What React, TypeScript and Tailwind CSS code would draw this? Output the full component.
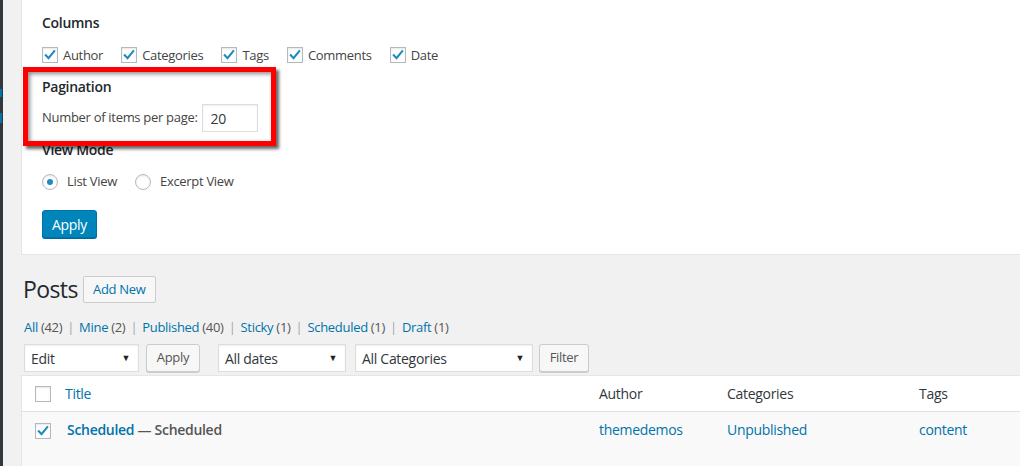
import type { ReactNode } from 'react';

const FONT = { fontFamily: '"Open Sans", "Noto Sans", Arial, sans-serif' };

function Check({ checked = false }: { checked?: boolean }) {
  return (
    <span className="flex h-4 w-4 shrink-0 items-center justify-center border border-[#b4b9be] bg-white shadow-[inset_0_1px_2px_rgba(0,0,0,0.1)]">
      {checked && (
        <svg viewBox="0 0 16 16" className="h-4 w-4">
          <path d="M3.2 8.4 L6.3 11.6 L12.8 3.6" fill="none" stroke="#1e8cbe" strokeWidth="2.4" strokeLinecap="square" />
        </svg>
      )}
    </span>
  );
}

function Radio({ checked = false }: { checked?: boolean }) {
  return (
    <span className="flex h-4 w-4 shrink-0 items-center justify-center rounded-full border border-[#b4b9be] bg-white shadow-[inset_0_1px_2px_rgba(0,0,0,0.1)]">
      {checked && <span className="h-[6px] w-[6px] rounded-full bg-[#1e8cbe]" />}
    </span>
  );
}

function Select({ label, width }: { label: string; width: string }) {
  return (
    <div className={`flex h-[28px] items-center justify-between border border-[#ddd] bg-white pl-[6px] pr-[8px] text-[14px] text-[#32373c] shadow-[inset_0_1px_2px_rgba(0,0,0,0.07)] ${width}`}>
      <span>{label}</span>
      <span className="text-[9px] text-[#222]">▼</span>
    </div>
  );
}

function Button({ children, className = '' }: { children: ReactNode; className?: string }) {
  return (
    <button className={`h-[28px] rounded-[3px] border border-[#ccc] bg-[#f7f7f7] text-[13px] text-[#555] shadow-[0_1px_0_#ccc] ${className}`}>
      {children}
    </button>
  );
}

const COLUMNS = ['Author', 'Categories', 'Tags', 'Comments', 'Date'];

const VIEWS: [string, number][] = [
  ['All', 42],
  ['Mine', 2],
  ['Published', 40],
  ['Sticky', 1],
  ['Scheduled', 1],
  ['Draft', 1],
];

export default function App() {
  return (
    <div
      className="relative flex h-[466px] w-[1020px] overflow-hidden bg-[#f1f1f1] text-[13px] tracking-[-0.3px] text-[#444]"
      style={FONT}
    >
      {/* admin menu edge */}
      <aside className="flex w-[3px] shrink-0 flex-col bg-[#32373c]">
        <div className="mt-[89px] h-[8px] w-[2px] bg-[#0073aa]" />
        <div className="mt-[16px] h-[10px] w-[2px] bg-[#0073aa]" />
      </aside>

      <div className="flex flex-1 flex-col pl-[18px]">
        {/* Screen options */}
        <section className="h-[255px] border-b border-l border-[#e5e5e5] bg-white pl-[20px] pt-[13px]">
          <h5 className="h-[20px] text-[14px] font-semibold leading-[20px] text-[#23282d]">Columns</h5>
          <div className="mt-[14px] flex h-[16px] items-center gap-[18px]">
            {COLUMNS.map((c) => (
              <label key={c} className="flex items-center gap-[5px] leading-4">
                <Check checked />
                <span>{c}</span>
              </label>
            ))}
          </div>

          <h5 className="mt-[14px] h-[20px] text-[14px] font-semibold leading-[20px] text-[#23282d]">Pagination</h5>
          <div className="mt-[7px] flex h-[28px] items-center gap-[4px]">
            <span>Number of items per page:</span>
            <div className="flex h-[28px] w-[56px] items-center border border-[#ddd] bg-white px-[8px] text-[14px] text-[#32373c] shadow-[inset_0_1px_2px_rgba(0,0,0,0.07)]">
              20
            </div>
          </div>

          <h5 className="mt-[8px] h-[20px] text-[14px] font-semibold leading-[20px] text-[#23282d]">View Mode</h5>
          <div className="mt-[14px] flex h-[16px] items-center">
            <label className="flex items-center gap-[9px]">
              <Radio checked />
              <span>List View</span>
            </label>
            <label className="ml-[18px] flex items-center gap-[9px]">
              <Radio />
              <span>Excerpt View</span>
            </label>
          </div>

          <button className="mt-[20px] h-[28px] w-[55px] rounded-[3px] border border-[#0073aa] bg-[#0085ba] text-[14px] text-white shadow-[0_1px_0_#006799]">
            Apply
          </button>
        </section>

        {/* Posts list */}
        <div className="flex flex-col pl-[2px]">
          <div className="mt-[21px] flex h-[27px] items-center gap-[5px]">
            <h1 className="text-[23px] leading-[27px] tracking-[-0.6px] text-[#23282d]">Posts</h1>
            <button className="h-[27px] w-[73px] rounded-[2px] border border-[#ccc] bg-[#f7f7f7] text-[13px] font-medium text-[#0073aa]">
              Add New
            </button>
          </div>

          <ul className="mt-[16px] flex h-[18px] items-center pl-[1px] text-[13px]">
            {VIEWS.map(([name, count], i) => (
              <li key={name} className="flex items-center">
                {i > 0 && <span className="mx-[5px] text-[#a0a5aa]">|</span>}
                <span className="text-[#0073aa]">{name}</span>
                <span className="ml-[3px] text-[#555]">({count})</span>
              </li>
            ))}
          </ul>

          <div className="mt-[7px] flex h-[28px] items-center pl-[1px]">
            <Select label="Edit" width="w-[115px]" />
            <Button className="ml-[7px] w-[54px]">Apply</Button>
            <Select label="All dates" width="ml-[18px] w-[128px]" />
            <Select label="All Categories" width="ml-[9px] w-[178px]" />
            <Button className="ml-[6px] w-[50px]">Filter</Button>
          </div>
        </div>

        {/* Table */}
        <div className="mt-[3px] flex-1 border-l border-t border-[#e5e5e5] bg-white text-[14px]">
          <div className="flex h-[36px] items-center border-b border-[#e1e1e1]">
            <div className="ml-[13px] w-[30px]">
              <Check />
            </div>
            <span className="w-[534px] text-[#0073aa]">Title</span>
            <span className="w-[128px] text-[#32373c]">Author</span>
            <span className="w-[192px] text-[#32373c]">Categories</span>
            <span className="text-[#32373c]">Tags</span>
          </div>
          <div className="flex h-full bg-[#f9f9f9] pt-[11px]">
            <div className="ml-[13px] w-[32px]">
              <Check checked />
            </div>
            <div className="-mt-[2px] flex h-[16px] items-center">
              <span className="w-[532px] font-semibold">
                <span className="text-[#0073aa]">Scheduled</span>
                <span className="text-[#555]"> — Scheduled</span>
              </span>
              <span className="w-[128px] text-[#0073aa]">themedemos</span>
              <span className="w-[192px] text-[#0073aa]">Unpublished</span>
              <span className="text-[#0073aa]">content</span>
            </div>
          </div>
        </div>
      </div>

      {/* annotation highlight */}
      <div className="pointer-events-none absolute left-[23px] top-[67px] h-[79px] w-[253px] border-[5px] border-[#ff0000] shadow-[3px_3px_3px_rgba(0,0,0,0.6),inset_2px_2px_4px_rgba(0,0,0,0.45)]" />
    </div>
  );
}
